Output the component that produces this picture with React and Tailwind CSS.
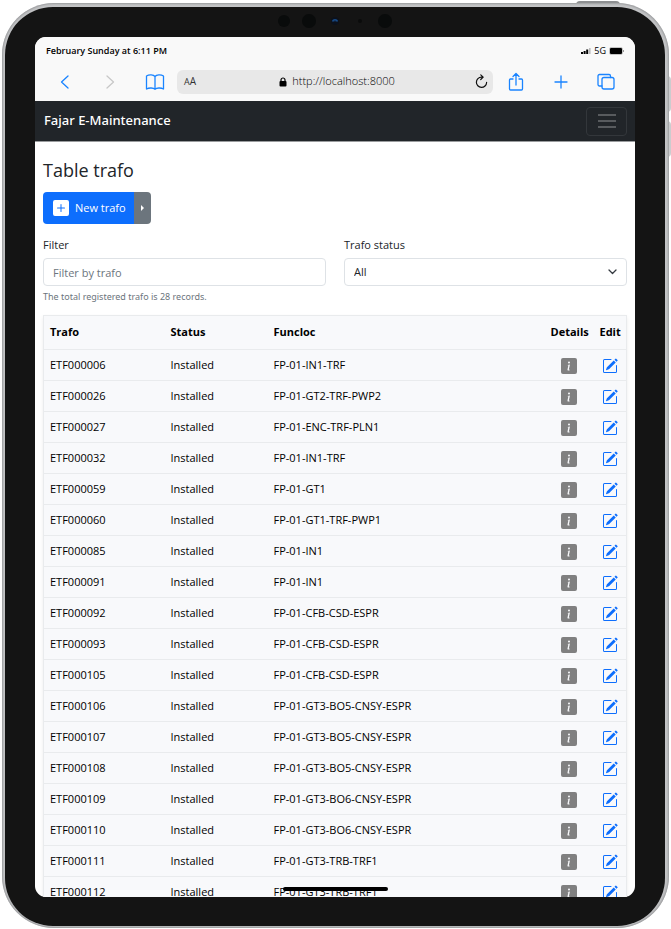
import React from "react";
import { BsInfoSquareFill, BsPencilSquare, BsPlusSquareFill } from "react-icons/bs";

const trafos = [
  ["ETF000006", "FP-01-IN1-TRF"],
  ["ETF000026", "FP-01-GT2-TRF-PWP2"],
  ["ETF000027", "FP-01-ENC-TRF-PLN1"],
  ["ETF000032", "FP-01-IN1-TRF"],
  ["ETF000059", "FP-01-GT1"],
  ["ETF000060", "FP-01-GT1-TRF-PWP1"],
  ["ETF000085", "FP-01-IN1"],
  ["ETF000091", "FP-01-IN1"],
  ["ETF000092", "FP-01-CFB-CSD-ESPR"],
  ["ETF000093", "FP-01-CFB-CSD-ESPR"],
  ["ETF000105", "FP-01-CFB-CSD-ESPR"],
  ["ETF000106", "FP-01-GT3-BO5-CNSY-ESPR"],
  ["ETF000107", "FP-01-GT3-BO5-CNSY-ESPR"],
  ["ETF000108", "FP-01-GT3-BO5-CNSY-ESPR"],
  ["ETF000109", "FP-01-GT3-BO6-CNSY-ESPR"],
  ["ETF000110", "FP-01-GT3-BO6-CNSY-ESPR"],
  ["ETF000111", "FP-01-GT3-TRB-TRF1"],
  ["ETF000112", "FP-01-GT3-TRB-TRF1"],
];

function ToolButton({ label, children, muted }) {
  return (
    <button
      type="button"
      aria-label={label}
      className={`flex h-6 w-[45px] items-center justify-center ${muted ? "text-[#c8c8c8]" : "text-[#1a84ff]"}`}
    >
      <svg width="20" height="20" viewBox="0 0 20 20" fill="none" stroke="currentColor" strokeWidth="1.3" strokeLinecap="round" strokeLinejoin="round" aria-hidden="true">
        {children}
      </svg>
    </button>
  );
}

function StatusBar() {
  return (
    <div className="flex h-7 items-center justify-between pl-[11px] pr-[11px] text-[9px] font-semibold text-black">
      <span>February Sunday at 6:11 PM</span>
      <span className="flex items-center gap-[3px]">
        <svg width="10" height="6" viewBox="0 0 10 6" aria-hidden="true">
          <rect x="0" y="4" width="2" height="2" />
          <rect x="2.6" y="3" width="2" height="3" />
          <rect x="5.2" y="1.5" width="2" height="4.5" />
          <rect x="8" y="0" width="1.6" height="6" fill="#bbb" />
        </svg>
        <span className="font-medium">5G</span>
        <svg width="15" height="8" viewBox="0 0 15 8" aria-hidden="true">
          <rect x="0.5" y="0.5" width="13" height="7" rx="1.5" fill="none" stroke="#c4c4c4" />
          <rect x="1" y="1" width="12" height="6" rx="1" />
          <rect x="14" y="3" width="1" height="2" fill="#999" />
        </svg>
      </span>
    </div>
  );
}

function BrowserBar() {
  return (
    <div className="flex h-9 items-center pb-[3px] pl-[7px] pr-[7px]">
      <ToolButton label="Back">
        <path d="M13 4 6.5 10l6.5 6" />
      </ToolButton>
      <ToolButton label="Forward" muted>
        <path d="M7 4l6.500 6L7 16" />
      </ToolButton>
      <ToolButton label="Bookmarks">
        <path d="M10 4.500C8.500 2.500 4 2.300 1.500 4v13c2.500-1.500 7-1.300 8.500.3 1.500-1.600 6-1.800 8.500-.3V4C16 2.300 11.500 2.500 10 4.500zv12.800" />
      </ToolButton>
      <div className="flex h-6 min-w-0 flex-1 items-center rounded-md bg-[#e8e8e8] pr-[5px] pl-[7px] text-black">
        <button type="button" aria-label="Text size" className="flex items-baseline text-[10px] text-[#333]">
          <span className="text-[9px]">A</span>A
        </button>
        <div className="flex flex-1 items-center justify-center gap-[5px] pl-[3px] text-[11px] font-light text-black">
          <svg width="8" height="10" viewBox="0 0 8 10" aria-hidden="true">
            <rect x="0.5" y="4" width="7" height="5.500" rx="1" />
            <path d="M2 4.500V3a2 2 0 0 1 4 0v1.500" fill="none" stroke="#000" strokeWidth="1.200" />
          </svg>
          <span>http://localhost:8000</span>
        </div>
        <button type="button" aria-label="Reload" className="flex h-4 items-center">
          <svg width="13" height="15" viewBox="0 0 14 16" fill="none" stroke="#111" strokeWidth="1.300" strokeLinecap="round" strokeLinejoin="round" aria-hidden="true">
            <path d="M8.500 3.300H7A5.500 5.500 0 1 0 12.500 9M6.200.800l2.600 2.500-2.600 2.600" />
          </svg>
        </button>
      </div>
      <ToolButton label="Share">
        <path d="M7 7H4.500a1 1 0 0 0-1 1v9a1 1 0 0 0 1 1h11a1 1 0 0 0 1-1V8a1 1 0 0 0-1-1H13M10 13V1.800M7 4.500l3-3 3 3" />
      </ToolButton>
      <ToolButton label="New tab">
        <path d="M10 4v12M4 10h12" />
      </ToolButton>
      <ToolButton label="Tabs">
        <rect x="6" y="5.500" width="12" height="11.500" rx="2" />
        <path d="M6 14H3.500a1.500 1.500 0 0 1-1.500-1.500V4a1.500 1.500 0 0 1 1.500-1.500h9.500A1.500 1.500 0 0 1 14.500 4v1.500" />
      </ToolButton>
    </div>
  );
}

function TrafoTable() {
  return (
    <table className="w-full table-fixed border-collapse border border-[#e9ebed] bg-[#f8f9fb] text-left text-[11px] whitespace-nowrap text-black shadow-[0_2px_4px_rgba(0,0,0,0.08)]">
      <colgroup>
        <col className="w-[121px]" />
        <col className="w-[103px]" />
        <col />
        <col className="w-[49px]" />
        <col className="w-[33px]" />
      </colgroup>
      <thead>
        <tr className="h-[34px] border-b border-[#e9ebed] font-bold">
          <th scope="col" className="px-[6px]">Trafo</th>
          <th scope="col" className="px-[6px]">Status</th>
          <th scope="col" className="px-[6px]">Funcloc</th>
          <th scope="col" className="px-[6px]">Details</th>
          <th scope="col" className="px-[6px]">Edit</th>
        </tr>
      </thead>
      <tbody>
        {trafos.map(([id, funcloc]) => (
          <tr key={id} className="h-[31px] border-b border-[#e9ebed]">
            <td className="px-[6px]">{id}</td>
            <td className="px-[6px]">Installed</td>
            <td className="px-[6px]">{funcloc}</td>
            <td>
              <a href="#details" aria-label={`Details of ${id}`} className="flex justify-center pt-[2px] text-[#808080]">
                <BsInfoSquareFill size={16} />
              </a>
            </td>
            <td>
              <a href="#edit" aria-label={`Edit ${id}`} className="flex justify-center pt-[2px] text-[#0d6efd]">
                <BsPencilSquare size={16} />
              </a>
            </td>
          </tr>
        ))}
      </tbody>
    </table>
  );
}

function Page() {
  return (
    <main className="px-2 pt-[15px]">
      <h1 className="mb-[9px] text-[18px] leading-[26px] font-medium text-[#212529]">Table trafo</h1>
      <div className="flex h-8">
        <button type="button" className="flex items-center gap-[6px] rounded-l bg-[#0d6efd] pr-2 pl-[10px] text-[11px] text-white">
          <BsPlusSquareFill size={16} />
          <span>New trafo</span>
        </button>
        <button type="button" aria-label="More actions" className="flex w-[17px] items-center justify-center rounded-r bg-[#6c757d] text-white">
          <svg width="3" height="6" viewBox="0 0 3 6" fill="currentColor" aria-hidden="true">
            <path d="M0 0l3 3-3 3z" />
          </svg>
        </button>
      </div>
      <div className="mt-3 grid grid-cols-2 gap-[18px] text-[11px] text-[#212529]">
        <div>
          <label htmlFor="filter" className="mb-1 block leading-[18px]">Filter</label>
          <input id="filter" type="text" placeholder="Filter by trafo" className="h-7 w-full rounded border border-[#dee2e6] bg-white px-[9px] placeholder:text-[#6c757d]" />
          <p className="mt-1 font-['Noto_Sans',sans-serif] text-[9px] leading-[14px] text-[#6c757d]">The total registered trafo is 28 records.</p>
        </div>
        <div>
          <label htmlFor="status" className="mb-1 block leading-[18px]">Trafo status</label>
          <div className="relative">
            <select id="status" className="block h-7 w-full appearance-none rounded border border-[#dee2e6] bg-white px-[9px]">
              <option>All</option>
              <option>Installed</option>
            </select>
            <svg className="pointer-events-none absolute top-[9px] right-[10px]" width="9" height="9" viewBox="0 0 9 9" fill="none" stroke="#343a40" strokeWidth="1.300" strokeLinecap="round" strokeLinejoin="round" aria-hidden="true">
              <path d="M1 3l3.500 3.500L8 3" />
            </svg>
          </div>
        </div>
      </div>
      <div className="mt-[11px]">
        <TrafoTable />
      </div>
    </main>
  );
}

export default function App() {
  return (
    <div className="relative h-screen overflow-hidden bg-white px-[2px] pt-[3px] pb-px font-['Open_Sans','Noto_Sans',sans-serif]">
      <div className="absolute top-[1px] right-[51px] h-1 w-11 rounded-t-sm bg-[#8d8f91]" />
      <div className="absolute top-[76px] right-0 h-9 w-1 rounded-r-sm bg-[#cbccce]" />
      <div className="absolute top-[121px] right-0 h-9 w-1 rounded-r-sm bg-[#cbccce]" />
      <div className="relative h-full rounded-[52px] bg-[#c3c4c6] pt-1 pr-1 pb-[2px] pl-[3px] shadow-[inset_0_0_2px_1px_#9a9b9d]">
        <div className="flex h-full flex-col rounded-[48px] bg-[#141414] px-[30px] pb-[29px]">
          <div className="flex h-[30px] shrink-0 items-center justify-center pb-1">
            <svg width="116" height="16" viewBox="0 0 116 16" aria-hidden="true">
              <circle cx="7" cy="9" r="6" fill="#090b0b" />
              <circle cx="32" cy="9" r="7" fill="#090b0b" />
              <circle cx="58" cy="9" r="4" fill="#0c111b" />
              <path d="M55 9.500a3 2.500 0 0 1 6 0h-2.500V8.500h-1v1z" fill="#174a87" />
              <circle cx="83" cy="9" r="2" fill="#0a0b0b" />
              <circle cx="108" cy="9" r="7" fill="#090b0b" />
            </svg>
          </div>
          <div className="relative min-h-0 flex-1 overflow-hidden rounded-[11px] bg-white">
            <div className="bg-[#f9f9f9]">
              <StatusBar />
              <BrowserBar />
            </div>
            <nav className="flex h-[41px] items-center justify-between border-b border-[#9a9c9e] bg-[#212529] pr-2 pl-[9px]">
              <a href="#home" className="font-['Noto_Sans',sans-serif] text-[13px] font-medium text-white">Fajar E-Maintenance</a>
              <button type="button" aria-label="Toggle navigation" className="flex h-[29px] w-[41px] items-center justify-center rounded border border-[#33373b] text-[#909294]">
                <svg width="18" height="14" viewBox="0 0 18 14" stroke="currentColor" strokeWidth="1.200" aria-hidden="true">
                  <path d="M0 1h18M0 7h18M0 13h18" />
                </svg>
              </button>
            </nav>
            <Page />
            <div className="absolute bottom-[6px] left-1/2 -ml-[52px] h-1 w-[105px] rounded-full bg-black" />
          </div>
        </div>
      </div>
    </div>
  );
}
